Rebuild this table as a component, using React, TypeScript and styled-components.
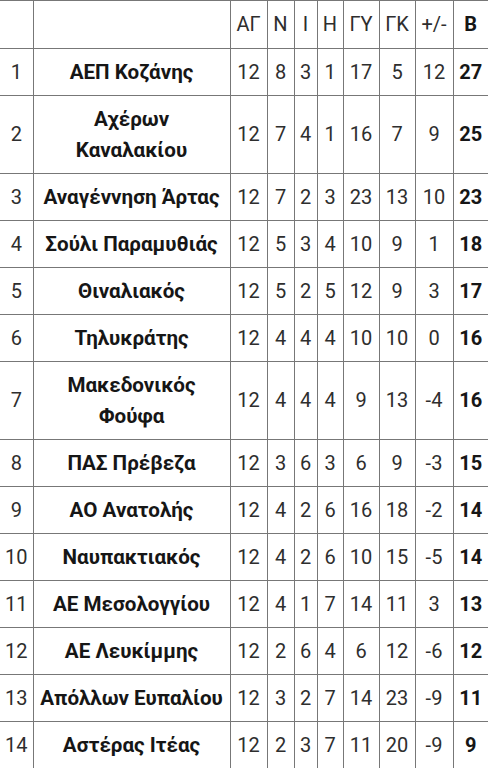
import React from 'react';
import styled, { createGlobalStyle } from 'styled-components';

const GlobalStyle = createGlobalStyle`
  html, body {
    margin: 0;
    padding: 0;
    background: #ffffff;
  }
  body {
    font-family: Roboto, "Noto Sans", "DejaVu Sans", sans-serif;
    overflow: hidden;
  }
`;

const Table = styled.table`
  width: 488px;
  table-layout: fixed;
  border-collapse: collapse;
  border-top: 1px solid #8a8a8a;
  font-size: 20px;
  color: #2e2e2e;
`;

const Cell = styled.td<{ $bold?: boolean; $wide?: boolean }>`
  border: 1px solid #777777;
  padding: 7.5px 1px;
  line-height: 31px;
  text-align: center;
  vertical-align: middle;
  white-space: pre-line;
  font-size: ${({ $wide }) => ($wide ? '20.6px' : '20px')};
  font-weight: ${({ $bold }) => ($bold ? 700 : 400)};
  color: ${({ $bold }) => ($bold ? '#161616' : '#2e2e2e')};
  padding-left: ${({ $wide }) => ($wide ? '4px' : '1px')};
  padding-right: ${({ $wide }) => ($wide ? '4px' : '1px')};

  &:first-child {
    border-left: none;
  }
  &:last-child {
    border-right: none;
  }
`;

const HeadCell = styled(Cell).attrs({ as: 'th' })`
  padding-top: 8px;
  padding-bottom: 8px;
`;

const widths = [33, 197, 37, 27, 23, 26, 36, 36, 38, 35];
const headers = ['', '', 'ΑΓ', 'Ν', 'Ι', 'Η', 'ΓΥ', 'ΓΚ', '+/-', 'Β'];

type Row = [string, number, number, number, number, number, number, number, number];

const rows: Row[] = [
  ['ΑΕΠ Κοζάνης', 12, 8, 3, 1, 17, 5, 12, 27],
  ['Αχέρων\nΚαναλακίου', 12, 7, 4, 1, 16, 7, 9, 25],
  ['Αναγέννηση Άρτας', 12, 7, 2, 3, 23, 13, 10, 23],
  ['Σούλι Παραμυθιάς', 12, 5, 3, 4, 10, 9, 1, 18],
  ['Θιναλιακός', 12, 5, 2, 5, 12, 9, 3, 17],
  ['Τηλυκράτης', 12, 4, 4, 4, 10, 10, 0, 16],
  ['Μακεδονικός\nΦούφα', 12, 4, 4, 4, 9, 13, -4, 16],
  ['ΠΑΣ Πρέβεζα', 12, 3, 6, 3, 6, 9, -3, 15],
  ['ΑΟ Ανατολής', 12, 4, 2, 6, 16, 18, -2, 14],
  ['Ναυπακτιακός', 12, 4, 2, 6, 10, 15, -5, 14],
  ['ΑΕ Μεσολογγίου', 12, 4, 1, 7, 14, 11, 3, 13],
  ['ΑΕ Λευκίμμης', 12, 2, 6, 4, 6, 12, -6, 12],
  ['Απόλλων Ευπαλίου', 12, 3, 2, 7, 14, 23, -9, 11],
  ['Αστέρας Ιτέας', 12, 2, 3, 7, 11, 20, -9, 9],
];

export default function App() {
  return (
    <>
      <GlobalStyle />
      <Table>
        <colgroup>
          {widths.map((w, i) => (
            <col key={i} style={{ width: w }} />
          ))}
        </colgroup>
        <thead>
          <tr>
            {headers.map((h, i) => (
              <HeadCell key={i} $bold={i === headers.length - 1}>
                {h}
              </HeadCell>
            ))}
          </tr>
        </thead>
        <tbody>
          {rows.map(([name, ...stats], i) => (
            <tr key={name}>
              <Cell>{i + 1}</Cell>
              <Cell $bold $wide>
                {name}
              </Cell>
              {stats.map((s, j) => (
                <Cell key={j} $bold={j === stats.length - 1}>
                  {s}
                </Cell>
              ))}
            </tr>
          ))}
        </tbody>
      </Table>
    </>
  );
}
